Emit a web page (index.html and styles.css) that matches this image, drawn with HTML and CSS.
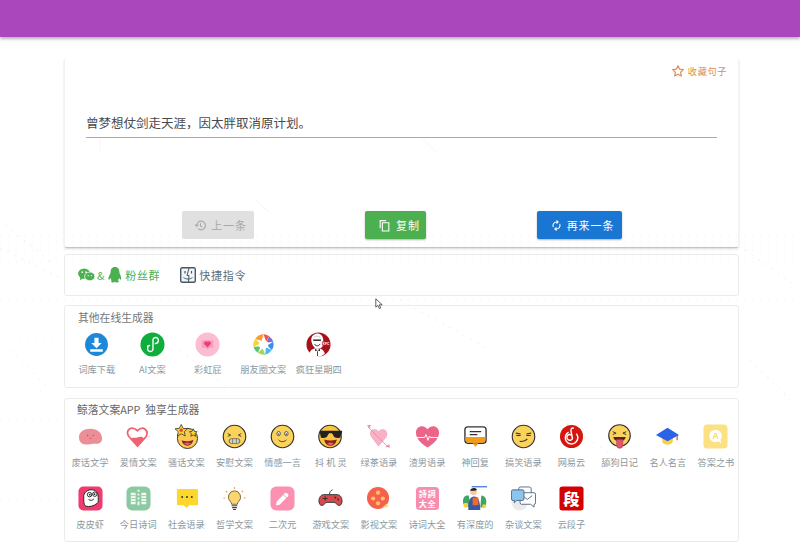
FILE: index.html
```html
<!DOCTYPE html>
<html lang="zh">
<head>
<meta charset="utf-8">
<title>生成器</title>
<link rel="stylesheet" href="styles.css">
</head>
<body>
<svg class="deco" viewBox="0 0 800 555"><g fill="none" stroke="#f0f0f0" stroke-width="1"><path d="M0 236h800M0 242h800M0 250h800M0 262h800M0 300h800M20 340h40M745 330h50M0 392h800M0 420h60M745 470h55M0 500h60" stroke-dasharray="1 7"/><path d="M0 248l60 30M5 225l50 40M745 250l50 35M750 360l40 40M10 350l40 40M400 300l90 50M560 420l60 40M180 350l50 40" stroke-dasharray="2 6"/></g><g fill="none" stroke="#f6f6f6"><path d="M100 138v14M422 138l14 14M255 200l14 12"/></g></svg>
<header class="topbar"></header>
<main class="page">
  <section class="card quote">
    <a class="fav">
      <svg class="fav-icon" viewBox="0 0 24 24"><path d="M12 3l2.800 5.900 6.400.8-4.700 4.400 1.200 6.400L12 17.400l-5.700 3.100 1.200-6.400-4.700-4.400 6.400-.8z" fill="none" stroke="#e08a4f" stroke-width="2" stroke-linejoin="round"/></svg>
      <span>收藏句子</span>
    </a>
    <p class="sentence">曾梦想仗剑走天涯&#65292;因太胖取消原计划。</p>
    <div class="actions">
      <button class="btn btn-off">
        <svg viewBox="0 0 24 24"><path d="M5 12a8 8 0 1 1 2.600 5.900M2 10.500l3 3 3-3M12 8v5l3 2" fill="none" stroke="#a8a8a8" stroke-width="2"/></svg>上一条
      </button>
      <button class="btn btn-green">
        <svg viewBox="0 0 24 24"><path d="M4 17V3h11M8 7h12v15H8z" fill="none" stroke="#fff" stroke-width="2"/></svg>复制
      </button>
      <button class="btn btn-blue">
        <svg viewBox="0 0 24 24"><path d="M5.500 15.500A7.500 7.500 0 0 1 12 4.500V1.500l4.500 4-4.500 4V6.500a5.500 5.500 0 0 0-5 7.500zM18.500 8.500A7.500 7.500 0 0 1 12 19.500v3l-4.500-4 4.500-4v3a5.500 5.500 0 0 0 5-7.500z" fill="#fff"/></svg>再来一条
      </button>
    </div>
  </section>

  <section class="card links">
    <a class="link link-green">
      <svg class="wx" viewBox="0 0 18 15"><ellipse cx="6.500" cy="6" rx="6.500" ry="5.500" fill="#4caf50"/><path d="M2.500 9.500L2 13l3.500-2z" fill="#4caf50"/><ellipse cx="12.500" cy="9" rx="5.500" ry="4.600" fill="#4caf50" stroke="#fff" stroke-width=".8"/><circle cx="4.500" cy="4.500" r=".9" fill="#fff"/><circle cx="8.500" cy="4.500" r=".9" fill="#fff"/><circle cx="10.800" cy="8.200" r=".7" fill="#fff"/><circle cx="14.200" cy="8.200" r=".7" fill="#fff"/></svg>
      <span class="amp">&amp;</span>
      <svg class="qq" viewBox="0 0 15 17"><path d="M7.500 0C4 0 2.800 2.800 2.800 5.500 2.800 7 1 9 .5 11.500c-.3 1.800.4 2.700 1.200 1.500l.8-1.200c.3 1 .8 1.700 1.500 2.300C3 14.700 3 16.500 5.500 16.500c1 0 1.600-.3 2-.7.4.4 1 .7 2 .7 2.500 0 2.500-1.800 1-2.400.7-.6 1.200-1.300 1.500-2.300l.8 1.200c.8 1.200 1.500.3 1.200-1.500C14 9 12.200 7 12.200 5.500 12.200 2.800 11 0 7.500 0z" fill="#4caf50"/></svg>
      <span class="link-text">粉丝群</span>
    </a>
    <a class="link link-dark">
      <svg class="finder" viewBox="0 0 16 16"><rect x=".7" y=".7" width="14.600" height="14.600" rx="1.500" fill="#f1f4f6" stroke="#455a64" stroke-width="1.400"/><path d="M9 1L7 8.500h2L8.500 15" fill="none" stroke="#455a64" stroke-width="1"/><path d="M3.500 10.500c2.500 2 6.500 2 9 0" fill="none" stroke="#455a64" stroke-width="1"/><path d="M5 4v2.500M11.500 4v2.500" stroke="#455a64" stroke-width="1.200"/></svg>
      <span class="link-text">快捷指令</span>
    </a>
  </section>

  <section class="card tools">
    <h2 class="card-title">其他在线生成器</h2>
    <div class="tool-row">
      <a class="tool">
        <svg viewBox="0 0 24 24"><circle cx="12" cy="12" r="11" fill="#1e88d8"/><path d="M10 5.500h4v5h3l-5 5-5-5h3zM6 16.500h12v2.500H6z" fill="#fff"/></svg>
        <span>词库下载</span>
      </a>
      <a class="tool">
        <svg viewBox="0 0 26 26"><circle cx="13" cy="13" r="12.500" fill="#0fae3c"/><path d="M8 14.500v2.500a2.800 2.800 0 1 0 5.500 0V9a2.800 2.800 0 1 1 5.500 0c0 2-1.500 2.800-3 3M10 14c-1.200.3-2 1.300-2 2.500" fill="none" stroke="#fff" stroke-width="1.400" stroke-linecap="round"/></svg>
        <span>AI文案</span>
      </a>
      <a class="tool">
        <svg viewBox="0 0 26 26"><circle cx="13" cy="13" r="12.500" fill="#fcbcd2"/><path d="M7 8.500h12v8h-4l-2 2-2-2H7z" fill="#f79cbb"/><path d="M13 16l-3.200-3.200a1.900 1.900 0 0 1 3.200-2.300 1.900 1.900 0 0 1 3.200 2.300z" fill="#e8426f"/></svg>
        <span>彩虹屁</span>
      </a>
      <a class="tool">
        <svg viewBox="-1.500 -1.500 27 27"><path d="M12 1a11 11 0 0 1 6 2l-3 6z" fill="#f4544a"/><path d="M18 3a11 11 0 0 1 4.500 6l-7.500 1z" fill="#7b6fd6"/><path d="M22.500 9a11 11 0 0 1-1.500 9l-5-5z" fill="#3c8de8"/><path d="M21 18a11 11 0 0 1-7 5l.5-8z" fill="#4bb8ee"/><path d="M14 23a11 11 0 0 1-8-2l5-5z" fill="#a4d65e"/><path d="M6 21a11 11 0 0 1-4.800-6.500L9 14z" fill="#5ec46a"/><path d="M1.200 14.500A11 11 0 0 1 3 6l6 5z" fill="#f6d33c"/><path d="M3 6a11 11 0 0 1 9-5l-2 7z" fill="#fb9a2e"/><path d="M12 6.500l5 3 0 5-5 3-5-3 0-5z" fill="#fff"/></svg>
        <span>朋友圈文案</span>
      </a>
      <a class="tool">
        <svg viewBox="0 0 26 26"><circle cx="13" cy="13" r="12.500" fill="#a5121c"/><path d="M5.500 9C5 4 9 1.500 12 1.500S18 4 18 9c0 2.500.5 4-.5 5.500l-2 2.500h-6l-2-2.500C6.500 13 6 11 5.500 9z" fill="#fff"/><path d="M7.500 8.500h8" stroke="#222" stroke-width="1.500"/><path d="M8 5.500c2-1.500 5-1.500 7 0" fill="none" stroke="#bbb" stroke-width=".8"/><path d="M9 12.500c1 2.500 4.500 2.500 5.500 0" fill="none" stroke="#222" stroke-width="1"/><path d="M3.500 23c.5-3.500 3-6 8-6s7.500 2.500 8 6a12.500 12.500 0 0 1-16 0z" fill="#fff"/><path d="M9.500 17.500l2.500 1.500 2.500-1.500v2.500L12 19l-2.500 1z" fill="#222"/><path d="M11.500 20h1v5h-1z" fill="#a5121c"/><rect x="16.500" y="10" width="8.500" height="4" fill="#c8141f"/><text x="20.700" y="13.200" class="kfc-text">KFC</text></svg>
        <span>疯狂星期四</span>
      </a>
    </div>
  </section>

  <section class="card app">
    <h2 class="card-title app-title">鲸落文案APP&nbsp; 独享生成器</h2>
    <div class="app-grid">
      <a class="item"><svg viewBox="0 0 26 26"><path d="M1 14C1 8 6 5 13 5c7 0 12 4 12 10 0 5-4 6-8 5.500-3-.3-5 .8-8 .8-4 0-8-2-8-7.300z" fill="#ec8e96"/><circle cx="10" cy="12" r=".8" fill="#b8545e"/><circle cx="16" cy="12" r=".8" fill="#b8545e"/><path d="M11.500 14.500c1 .7 2 .7 3 0" stroke="#b8545e" fill="none" stroke-width=".6"/></svg><span>废话文学</span></a>

      <a class="item"><svg viewBox="0 0 26 26"><path d="M12 23L3 13C-1 7 5 1 12 7c6-6 12 0 9 6z" fill="#fff" stroke="#f2616f" stroke-width="1.800"/><path d="M12 23l-7-7.500c2-2 3-.5 7-1.500s4.500-1 7 1.500z" fill="#f2616f"/><circle cx="24" cy="13" r=".8" fill="#f9b4a8"/><circle cx="25" cy="4" r=".7" fill="#f9d4a8"/></svg><span>爱情文案</span></a>

      <a class="item"><svg viewBox="0 0 26 26"><circle cx="14" cy="15" r="10.500" fill="#fbc950" stroke="#333" stroke-width="1"/><path d="M8 17c3 1.500 8 1.500 12-.5-.5 4-3 6-6 6s-5.500-2-6-5.500z" fill="#8a2020"/><path d="M10 20c2-1 6-1 8 0l-4 2z" fill="#ea5a6a"/><path d="M7.500.5l2 4 4.500.5-3.300 3 1 4.500-4.200-2.300-4 2.300 1-4.500L1 5l4.500-.5z" fill="#fcd22f" stroke="#333" stroke-width=".8"/><circle cx="7.500" cy="6.500" r="1.800" fill="#ea4a3a"/><path d="M20 5l1.300 2.600 2.700.4-2 2 .5 2.800-2.500-1.400-2.500 1.400.5-2.800-2-2 2.700-.4z" fill="#fcd22f" stroke="#333" stroke-width=".8"/></svg><span>骚话文案</span></a>

      <a class="item"><svg viewBox="0 0 26 26"><circle cx="13" cy="13" r="11.700" fill="#fbd35c" stroke="#333" stroke-width="1.200"/><path d="M6 10l3 1.500-3 1.500M20 10l-3 1.500 3 1.500" fill="none" stroke="#333" stroke-width=".9"/><rect x="7.500" y="15.500" width="11" height="4.500" rx="2" fill="#fff" stroke="#333" stroke-width=".8"/><path d="M11 15.500v4.500M15 15.500v4.500M7.500 17.700h11" stroke="#333" stroke-width=".5"/></svg><span>安慰文案</span></a>

      <a class="item"><svg viewBox="0 0 26 26"><circle cx="13" cy="13" r="11.700" fill="#fbd35c" stroke="#333" stroke-width="1.200"/><ellipse cx="9" cy="10" rx="1.800" ry="2.200" fill="#fff" stroke="#333" stroke-width=".8"/><ellipse cx="17" cy="10" rx="1.800" ry="2.200" fill="#fff" stroke="#333" stroke-width=".8"/><circle cx="9" cy="10.500" r=".8" fill="#333"/><circle cx="17" cy="10.500" r=".8" fill="#333"/><path d="M9 16.500c2 2.500 5.500 2.500 8 0" fill="none" stroke="#333" stroke-width="1"/></svg><span>情感一言</span></a>

      <a class="item"><svg viewBox="0 0 26 26"><circle cx="12.500" cy="13" r="11.700" fill="#fbc53f" stroke="#333" stroke-width="1.200"/><path d="M2 7h23v2l-2 5c-2 1-6 1-7-2l-1.500-2.500h-3L10 12c-1 3-5 3-7 2L2 9z" fill="#222"/><path d="M6.500 16c4 1.500 9 1.500 13 0-.5 4-3 6.500-6.500 6.500S7 20 6.500 16z" fill="#8a2020"/><path d="M9.500 20c2-1 5-1 7 0l-3.500 2.500z" fill="#ee5a70"/></svg><span>抖 机 灵</span></a>

      <a class="item"><svg viewBox="0 0 26 26"><path d="M13 23L5.500 13C2 7 9 3 13 8c4-5 11-1 8 5.500z" fill="#fbb0c6" stroke="#e99ab0" stroke-width=".6"/><path d="M2 3l21 21" stroke="#e88a9f" stroke-width=".9"/><path d="M1 1h4l-1 3.500zM20 24l4-3 1 3.500z" fill="#ec8fa5"/></svg><span>绿茶语录</span></a>

      <a class="item"><svg viewBox="0 0 26 26"><path d="M13 24.500C6 20 1 15 1 9c0-7 8-9 12-3.500C17 0 25 2 25 9c0 6-5 11-12 15.500z" fill="#ec6489"/><path d="M2 14h8l1.500-3 2 6 1.500-4.500 1 1.500h8" fill="none" stroke="#fff" stroke-width="1"/></svg><span>渣男语录</span></a>

      <a class="item"><svg viewBox="0 0 26 26"><rect x="2" y="3" width="22" height="17" rx="3" fill="#fff" stroke="#333" stroke-width="1.400"/><path d="M2.700 13.500h20.600V17a2.500 2.500 0 0 1-2.500 2.500H5.200A2.500 2.500 0 0 1 2.700 17z" fill="#f59c17"/><path d="M10 20h6l-3 4z" fill="#f59c17"/><path d="M7 8h12M7 11h8" stroke="#333" stroke-width="1.200"/></svg><span>神回复</span></a>

      <a class="item"><svg viewBox="0 0 26 26"><circle cx="13" cy="13" r="11.700" fill="#fbd35c" stroke="#333" stroke-width="1.200"/><path d="M5 9.500l5 1M16 10.500l5-1M5.500 12h4.500M16 12h4.500" stroke="#333" stroke-width="1.100"/><path d="M9 18c3 .5 6 0 8-2.500" fill="none" stroke="#333" stroke-width="1.100"/></svg><span>搞笑语录</span></a>

      <a class="item"><svg viewBox="0 0 26 26"><circle cx="13" cy="13" r="12" fill="#d4160f"/><path d="M15.500 4.500c-2-1-3.500.5-3 3l1.500 7.500a3 3 0 1 1-1-3.500" fill="none" stroke="#fff" stroke-width="1.500"/><path d="M10 8.500a6.500 6.500 0 1 0 8 1.500" fill="none" stroke="#fff" stroke-width="1.500"/></svg><span>网易云</span></a>

      <a class="item"><svg viewBox="0 0 26 26"><circle cx="13" cy="12" r="11.200" fill="#fbd35c" stroke="#333" stroke-width="1.200"/><path d="M6 8l3.500 1.500L6 11M20 8l-3.500 1.500L20 11" fill="none" stroke="#333" stroke-width="1"/><path d="M6.500 13.500h13c-.5 3-3 4.500-6.500 4.500s-6-1.500-6.500-4.500z" fill="#5a2020"/><path d="M10 16h6.500v6a3.200 3.200 0 0 1-6.500 0z" fill="#e2546a" stroke="#a83040" stroke-width=".5"/></svg><span>舔狗日记</span></a>

      <a class="item"><svg viewBox="0 0 26 26"><path d="M7.500 12v6c0 2 2 3.500 5.500 3.500s5.500-1.500 5.500-3.500v-6z" fill="#fcd03a"/><path d="M13 4L1 11.500 13 18l12-6.500z" fill="#2a62e8"/><path d="M23 12v5" stroke="#d8433c" stroke-width="1.200"/></svg><span>名人名言</span></a>

      <a class="item"><svg viewBox="0 0 26 26"><rect x="0.500" y="0.500" width="25" height="25" rx="4" fill="#fbe084"/><circle cx="13" cy="12.500" r="6.500" fill="#fff"/><path d="M16 18l3 2-1-4z" fill="#fff"/><text x="13" y="15.500" class="answer-text">A</text></svg><span>答案之书</span></a>

      <a class="item"><svg viewBox="0 0 26 26"><rect x="0.500" y="0.500" width="25" height="25" rx="5" fill="#f03a70"/><path d="M6 12c-1-5 5-9 9-8 5 .5 6 4 6 8 0 3 .5 5-1 6-4 3-8 4-12 3-2.500-2-2-6-2-9z" fill="#fff" stroke="#222" stroke-width="1"/><circle cx="12" cy="9" r="2.300" fill="#fff" stroke="#222"/><circle cx="17.500" cy="8.500" r="2.300" fill="#fff" stroke="#222"/><circle cx="12.300" cy="9" r=".9" fill="#222"/><circle cx="17.200" cy="8.500" r=".9" fill="#222"/><path d="M11 14c2 1.500 4 1 5.500-.5" fill="none" stroke="#222"/></svg><span>皮皮虾</span></a>

      <a class="item"><svg viewBox="0 0 26 26"><rect x="0.500" y="0.500" width="25" height="25" rx="6" fill="#8cc9a1"/><path d="M5 7h5v12H5zM12 4h2v2h-2zM12 8h2v2h-2zM12 12h2v2h-2zM12 16h2v4h-2zM16 7h5v12h-5z" fill="#f2f8f3"/><path d="M5 10h5M5 13h5M5 16h5M16 10h5M16 13h5M16 16h5" stroke="#8cc9a1" stroke-width=".9"/></svg><span>今日诗词</span></a>

      <a class="item"><svg viewBox="0 0 26 26"><path d="M3 4a1 1 0 0 1 1-1h20a1 1 0 0 1 1 1v15a1 1 0 0 1-1 1H16l-3 3-3-3H4a1 1 0 0 1-1-1z" fill="#fed72e"/><circle cx="8.500" cy="11.500" r="1" fill="#333"/><circle cx="13.500" cy="11.500" r="1" fill="#333"/><circle cx="18.500" cy="11.500" r="1" fill="#333"/></svg><span>社会语录</span></a>

      <a class="item"><svg viewBox="0 0 26 26"><path d="M13 5a6.500 6.500 0 0 0-4 11.500c.8.7 1 1.500 1 2.500h6c0-1 .2-1.800 1-2.500A6.500 6.500 0 0 0 13 5z" fill="#fbd66e" stroke="#6b5a3a" stroke-width=".9"/><path d="M10 20.500h6M10.500 22.500h5M11.500 24.500h3" stroke="#444" stroke-width="1.100"/><path d="M13 1v2M4 5l1.500 1.500M22 5l-1.500 1.500M1.500 12.500h2M22.500 12.500h2" stroke="#f0a838" stroke-width="1.200"/></svg><span>哲学文案</span></a>

      <a class="item"><svg viewBox="0 0 26 26"><rect x="0.500" y="0.500" width="25" height="25" rx="6" fill="#fb90b0"/><path d="M7 16L15.500 7.500a1.500 1.500 0 0 1 2 0l1.200 1.200a1.500 1.500 0 0 1 0 2L10 19.500l-3.800.8z" fill="#fff"/><path d="M14 9l3.300 3.300" stroke="#fb90b0"/></svg><span>二次元</span></a>

      <a class="item"><svg viewBox="0 0 26 26"><path d="M12 9c0-3 1-4 3-5" fill="none" stroke="#333"/><path d="M6 9h14c3 0 5 3 5 6.500S23 21 21 20c-2-1-2.500-3-4.500-3h-7c-2 0-2.500 2-4.500 3-2 1-4-1-4-4.500S3 9 6 9z" fill="#d5494f" stroke="#333" stroke-width="1"/><path d="M5 13h5M7.500 11v4" stroke="#333" stroke-width="1.200"/><circle cx="18" cy="12" r="1" fill="#333"/><circle cx="21" cy="14" r="1" fill="#333"/></svg><span>游戏文案</span></a>

      <a class="item"><svg viewBox="0 0 26 26"><circle cx="12.500" cy="12.500" r="11.500" fill="#f6614c"/><path d="M16 23l7-1.500-1.500-3z" fill="#f9d77e"/><circle cx="12.500" cy="7" r="2.200" fill="#fbc36b"/><circle cx="7.500" cy="13" r="2.200" fill="#fbc36b"/><circle cx="17.500" cy="13" r="2.200" fill="#fbc36b"/><circle cx="12.500" cy="18" r="2.200" fill="#fbc36b"/></svg><span>影视文案</span></a>

      <a class="item"><svg viewBox="0 0 26 26"><rect x="1" y="1" width="24" height="24" rx="4" fill="#f88dae"/><text x="13" y="11" class="poem-text">詩詞</text><text x="13" y="21.500" class="poem-text">大全</text></svg><span>诗词大全</span></a>

      <a class="item"><svg viewBox="0 0 26 26"><rect x="9" y="0" width="16" height="1.500" fill="#5a86d8"/><path d="M0 16c0-5 3-7 6-6l2 11c-3 2-8 0-8-5zM19 10c4 0 6 4 5 9-1 3-4 4-6 3z" fill="#3fa564"/><circle cx="3" cy="20" r="2.500" fill="#f6d33c"/><circle cx="22" cy="21" r="2" fill="#f6d33c"/><circle cx="11" cy="6" r="3.500" fill="#f4c9a8"/><path d="M7.500 5c0-3 6-4 7-1l-2 1z" fill="#222"/><path d="M5.500 25c0-10 2-14 6-14s6 3 6.500 14z" fill="#3658a8"/><rect x="10" y="12" width="6" height="8" fill="#f2692a"/></svg><span>有深度的</span></a>

      <a class="item"><svg viewBox="0 0 26 26"><circle cx="9" cy="17" r="8.500" fill="#e8eaec"/><rect x="8" y="1" width="13" height="9" rx="2" fill="#fff" stroke="#46607a" stroke-width=".9"/><path d="M9 7h15a1.500 1.500 0 0 1 1.500 1.500v9A1.500 1.500 0 0 1 24 19v3l-3.500-3H11A1.500 1.500 0 0 1 9.500 17.500z" fill="#fff" stroke="#46607a" stroke-width=".9"/><path d="M12 10l5 4 5-4" fill="none" stroke="#46607a" stroke-width=".9"/><path d="M2 4h10a1.500 1.500 0 0 1 1.500 1.500v8A1.500 1.500 0 0 1 12 15H6l-2.500 2.500V15H2A1.500 1.500 0 0 1 .5 13.500v-8A1.500 1.500 0 0 1 2 4z" fill="#8dc4ee" stroke="#46607a" stroke-width=".9"/></svg><span>杂谈文案</span></a>

      <a class="item"><svg viewBox="0 0 26 26"><rect x="0.500" y="0.500" width="25" height="25" rx="3" fill="#d30000"/><text x="13" y="19.500" class="duan-text">段</text></svg><span>云段子</span></a>
    </div>
  </section>
</main>
<svg class="cursor" viewBox="0 0 10 15"><path d="M1 1v10.500l2.600-2.300 1.700 4 1.800-.8-1.700-3.900H9z" fill="#fff" stroke="#222" stroke-width=".9"/></svg>
</body>
</html>
```

FILE: styles.css
```css
* { box-sizing: border-box; }
html, body { margin: 0; padding: 0; }
body {
  width: 800px;
  height: 555px;
  overflow: hidden;
  position: relative;
  background: #fff;
  font-family: "Noto Sans CJK SC", "Noto Sans", sans-serif;
}
.deco {
  position: absolute;
  left: 0;
  top: 0;
  width: 800px;
  height: 555px;
  z-index: -1;
}
.topbar {
  height: 37px;
  background: #ab47bc;
  box-shadow: 0 2px 3px rgba(0, 0, 0, .3);
}
.page {
  width: 675px;
  margin-left: 64px;
  padding-top: 21px;
  display: flex;
  flex-direction: column;
}
.card {
  border-radius: 3px;
  border: 1px solid #ebebeb;
}
.quote {
  height: 190px;
  padding: 0 21px;
  border-width: 0 1px 1px;
  border-color: #f2f2f2 #f2f2f2 #c4c4c4;
  box-shadow: 0 1px 2px rgba(0, 0, 0, .15);
  clip-path: inset(0 -3px -4px -3px);
  display: flex;
  flex-direction: column;
}
.fav {
  align-self: flex-end;
  margin: 6px -10px 0 0;
  display: flex;
  align-items: center;
  gap: 3px;
  color: #e08a4f;
  font-size: 9.200px;
  letter-spacing: .6px;
  height: 14px;
}
.fav-icon { width: 14px; height: 14px; margin-left: -2px; }
.sentence {
  margin: 34px 0 0;
  height: 26px;
  line-height: 22px;
  font-size: 12.500px;
  font-weight: 400;
  color: #4a4a4a;
  border-bottom: 1px solid #aaa;
}
.actions {
  display: flex;
  justify-content: center;
  gap: 111px;
  margin-top: 73px;
}
.btn {
  height: 28px;
  border: 0;
  border-radius: 2px;
  font-family: inherit;
  font-size: 11px;
  letter-spacing: .9px;
  display: flex;
  align-items: center;
  justify-content: center;
  gap: 4px;
  padding: 0 0 0 6px;
  box-shadow: 0 1px 2px rgba(0, 0, 0, .3);
}
.btn svg { width: 13px; height: 13px; }
.btn-off { width: 72px; background: #e0e0e0; color: #a8a8a8; box-shadow: none; }
.btn-green { width: 61px; background: #4caf50; color: #fff; padding-left: 8px; gap: 5px; }
.btn-blue { width: 85px; background: #1976d2; color: #fff; }
.links {
  height: 42px;
  margin-top: 6px;
  padding-left: 13px;
  display: flex;
  align-items: center;
  gap: 20px;
}
.link { display: flex; align-items: center; font-size: 11px; letter-spacing: .7px; }
.link-green { color: #4caf50; }
.link-dark { color: #5a6d78; }
.wx { width: 17px; height: 14px; }
.amp { margin: 0 3px 0 2px; }
.qq { width: 14px; height: 16px; margin-right: 3px; }
.finder { width: 16px; height: 16px; margin-right: 3px; }
.tools {
  height: 83px;
  margin-top: 9px;
  padding: 4px 0 0 13px;
}
.card-title {
  margin: 0;
  font-size: 10.800px;
  font-weight: 400;
  color: #777;
  line-height: 14px;
}
.tool-row { display: flex; margin: 8px 0 0 -5px; }
.tool {
  width: 55.500px;
  margin-left: -4px;
  margin-right: 4px;
  display: flex;
  flex-direction: column;
  align-items: center;
  font-size: 9.200px;
  color: #8b98a0;
  white-space: nowrap;
}
.tool svg { width: 25px; height: 25px; }
.tool span { margin-top: 5px; line-height: 14px; }
.app {
  height: 144px;
  margin-top: 10px;
  padding: 3px 0 0 12px;
}
.app-title { color: #666; }
.app-grid {
  margin: 8px 0 0 -13px;
  display: grid;
  grid-template-columns: repeat(14, 48.150px);
  grid-auto-rows: 62px;
  padding-left: 2px;
}
.item {
  display: flex;
  flex-direction: column;
  align-items: center;
  font-size: 9.200px;
  color: #8b98a0;
  white-space: nowrap;
}
.item svg { width: 25px; height: 25px; flex: none; }
.item span { margin-top: 5.500px; line-height: 14px; }
.kfc-text { font-family: "Liberation Sans", sans-serif; font-size: 3.400px; font-weight: 700; fill: #fff; text-anchor: middle; }
.answer-text { font-family: "Liberation Sans", sans-serif; font-size: 9px; font-weight: 700; fill: #fbd66e; text-anchor: middle; }
.poem-text { font-family: "Noto Sans CJK TC", serif; font-size: 8.500px; font-weight: 700; fill: #fff; text-anchor: middle; letter-spacing: .5px; }
.duan-text { font-family: "Noto Sans CJK SC", sans-serif; font-size: 17px; font-weight: 900; fill: #fff; text-anchor: middle; }
.cursor { position: absolute; left: 375px; top: 298px; width: 8px; height: 12px; }
```
